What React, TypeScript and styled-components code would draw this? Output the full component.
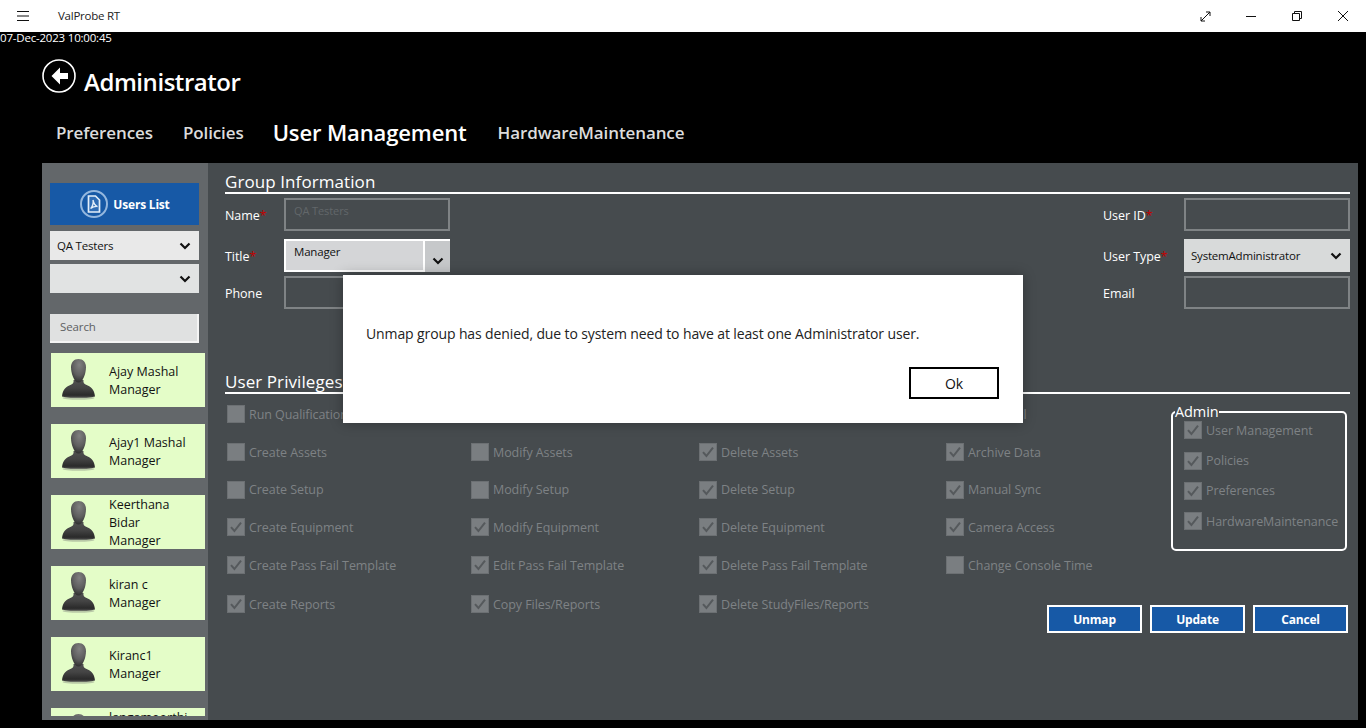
import React from "react";
import styled, { createGlobalStyle } from "styled-components";

const GlobalStyle = createGlobalStyle`
  html, body {
    margin: 0;
    padding: 0;
    background: #000;
  }
  * {
    box-sizing: border-box;
  }
`;

const font = `"Open Sans", "Noto Sans", sans-serif`;

const Page = styled.div`
  position: relative;
  width: 1366px;
  height: 728px;
  overflow: hidden;
  display: flex;
  flex-direction: column;
  background: #000;
  font-family: ${font};
`;

const TitleBar = styled.div`
  height: 32px;
  flex: none;
  background: #fff;
  display: flex;
  align-items: center;
  color: #222;
`;

const Hamburger = styled.div`
  width: 58px;
  padding-left: 17px;
  display: flex;
`;

const AppName = styled.div`
  font-size: 11.5px;
  letter-spacing: -0.25px;
  padding-bottom: 1px;
  flex: 1;
`;

const WindowButton = styled.div`
  width: 46px;
  height: 32px;
  display: flex;
  align-items: center;
  justify-content: center;
`;

const Stamp = styled.div`
  height: 12px;
  color: #fff;
  font-size: 11.5px;
  line-height: 12px;
  letter-spacing: -0.2px;
`;

const Header = styled.div`
  padding: 15px 0 0 42px;
  display: flex;
  align-items: flex-start;
  gap: 8px;
  height: 64px;
  flex: none;
`;

const PageTitle = styled.h1`
  margin: 7px 0 0;
  color: #fff;
  font-size: 24px;
  line-height: 32px;
  font-weight: 600;
  letter-spacing: -0.45px;
`;

const Tabs = styled.div`
  display: flex;
  align-items: center;
  height: 55px;
  flex: none;
  padding: 0 0 7px 56px;
`;

const Tab = styled.div<{ $active?: boolean; $gap: number }>`
  color: ${(p) => (p.$active ? "#fff" : "#dcdcdc")};
  font-size: ${(p) => (p.$active ? "22px" : "17px")};
  font-weight: 600;
  letter-spacing: ${(p) => (p.$active ? "-0.13px" : "-0.1px")};
  margin-right: ${(p) => p.$gap}px;
  white-space: nowrap;
`;

const Panel = styled.div`
  flex: none;
  margin-left: 42px;
  width: 1316px;
  height: 557px;
  display: flex;
`;

const Sidebar = styled.div`
  width: 166px;
  flex: none;
  background: #63676a;
  padding: 20px 0 0 8px;
  display: flex;
  flex-direction: column;
`;

const ListButton = styled.div`
  width: 149px;
  height: 42px;
  background: #1759a6;
  color: #fff;
  font-size: 12px;
  font-weight: 700;
  letter-spacing: -0.2px;
  display: flex;
  align-items: center;
  justify-content: center;
  gap: 4px;
  margin-bottom: 6px;
`;

const SideSelect = styled.div<{ $tone: string; $gap: number }>`
  width: 149px;
  height: 29px;
  background: ${(p) => p.$tone};
  color: #111;
  font-size: 11.5px;
  letter-spacing: -0.2px;
  display: flex;
  align-items: center;
  justify-content: space-between;
  padding: 0 8px 0 7px;
  margin-bottom: ${(p) => p.$gap}px;
`;

const SearchBox = styled.div`
  width: 149px;
  height: 29px;
  background: #e0e1e1;
  border-right: 2px solid #f4f4f4;
  border-bottom: 2px solid #f4f4f4;
  color: #5d6062;
  font-size: 11.5px;
  letter-spacing: -0.1px;
  display: flex;
  align-items: center;
  padding: 0 0 2px 10px;
  margin-bottom: 10px;
`;

const UserList = styled.div`
  height: 363px;
  overflow: hidden;
  padding-left: 1px;
  display: flex;
  flex-direction: column;
  gap: 17px;
`;

const UserCard = styled.div`
  width: 154px;
  height: 54px;
  flex: none;
  background: #e4fdc8;
  display: flex;
  align-items: center;
  padding-left: 10px;
  gap: 13px;
  color: #111;
  font-size: 12.5px;
  line-height: 18px;
  overflow: hidden;
`;

const UserText = styled.div`
  width: 82px;
  flex: none;
  padding-top: 2px;
  white-space: nowrap;
`;

const Main = styled.div`
  flex: 1;
  min-width: 0;
  background: #464b4e;
  padding: 8px 8px 0 17px;
`;

const SectionTitle = styled.div<{ $top?: number }>`
  height: 23px;
  margin-top: ${(p) => p.$top ?? 0}px;
  border-bottom: 2px solid #fff;
  color: #fff;
  font-size: 17px;
  line-height: 21px;
  letter-spacing: 0.08px;
  white-space: nowrap;
`;

const FormGrid = styled.div`
  display: grid;
  grid-template-columns: 59px 166px 1fr 81px 166px;
  grid-template-rows: 41px 37px 33px;
  margin-top: 4px;
`;

const FieldLabel = styled.div`
  height: 33px;
  padding-top: 2px;
  display: flex;
  align-items: center;
  color: #fff;
  font-size: 12.5px;
  letter-spacing: -0.05px;
  white-space: nowrap;
`;

const Required = styled.span`
  color: #c00000;
`;

const TextField = styled.div`
  height: 33px;
  border: 2px solid #7f8385;
  color: #62676a;
  font-size: 11px;
  padding: 3px 0 0 8px;
  letter-spacing: -0.1px;
`;

const TitleSelect = styled.div`
  height: 33px;
  display: flex;
  background: #fff;
  padding: 2px 0 0 2px;
  color: #111;
  font-size: 11.5px;
  letter-spacing: -0.2px;
`;

const TitleValue = styled.div`
  width: 137px;
  height: 29px;
  background: #d4d5d7;
  padding: 3px 0 0 8px;
`;

const TitleArrow = styled.div`
  margin-left: 2px;
  flex: 1;
  height: 31px;
  background: #c6c8ca;
  display: flex;
  align-items: center;
  justify-content: center;
  padding-top: 8px;
`;

const TypeSelect = styled.div`
  height: 33px;
  background: #d8dada;
  color: #111;
  font-size: 11.5px;
  letter-spacing: -0.2px;
  display: flex;
  align-items: center;
  justify-content: space-between;
  padding: 0 8px 0 7px;
`;

const PrivilegeGrid = styled.div`
  display: grid;
  grid-template-columns: 244px 228px 247px 225px 179px;
  grid-template-rows: 38px 38px 37px 38px 38px 40px;
  padding-left: 2px;
  margin-top: 1px;
`;

const CheckRow = styled.div`
  display: flex;
  align-items: center;
  gap: 4px;
  color: #7e8285;
  font-size: 12.5px;
  letter-spacing: -0.07px;
  white-space: nowrap;
`;

const Box = styled.div`
  width: 18px;
  height: 18px;
  flex: none;
  background: #7a7e81;
  border: 1px solid #6c7073;
  display: flex;
  align-items: center;
  justify-content: center;
`;

const AdminGroup = styled.fieldset`
  grid-column: 5;
  grid-row: 1 / 6;
  align-self: start;
  width: 176px;
  height: 148px;
  margin: 8px 0 0;
  padding: 0 0 0 11px;
  border: 2px solid #fff;
  border-radius: 5px;
  display: flex;
  flex-direction: column;
`;

const AdminLegend = styled.legend`
  color: #fff;
  font-size: 14.5px;
  line-height: 18px;
  padding: 0;
  margin-left: -9px;
  letter-spacing: -0.1px;
`;

const AdminRows = styled.div`
  margin-top: -6px;
  display: flex;
  flex-direction: column;
`;

const AdminRow = styled(CheckRow)`
  height: 30.4px;
  flex: none;
`;

const ActionRow = styled.div`
  grid-column: 4 / 6;
  grid-row: 6;
  align-self: start;
  margin-top: 21px;
  display: flex;
  justify-content: flex-end;
  gap: 8px;
  padding-right: 2px;
`;

const ActionButton = styled.div`
  width: 95px;
  height: 28px;
  background: #1759a6;
  border: 2px solid #fff;
  color: #fff;
  font-size: 12px;
  font-weight: 700;
  letter-spacing: -0.2px;
  display: flex;
  align-items: center;
  justify-content: center;
`;

const Modal = styled.div`
  position: absolute;
  left: 343px;
  top: 275px;
  width: 680px;
  height: 148px;
  background: #fff;
  box-shadow: 0 0 12px rgba(0, 0, 0, 0.3);
  padding: 49px 24px 0 23px;
  display: flex;
  flex-direction: column;
  align-items: flex-start;
`;

const ModalText = styled.div`
  color: #222;
  font-size: 14px;
  line-height: 20px;
  letter-spacing: -0.115px;
  white-space: nowrap;
`;

const OkButton = styled.div`
  align-self: flex-end;
  width: 90px;
  height: 32px;
  margin-top: 23px;
  border: 2px solid #000;
  background: #fff;
  color: #111;
  font-size: 14px;
  display: flex;
  align-items: center;
  justify-content: center;
`;

const Chevron = () => (
  <svg width="12" height="8" viewBox="0 0 12 8">
    <path d="M1.5 1.5 6 6l4.5-4.5" fill="none" stroke="#111" strokeWidth="2.2" />
  </svg>
);

const Tick = () => (
  <svg width="14" height="14" viewBox="0 0 14 14">
    <path d="M2 7.2 5.4 11 12 2.6" fill="none" stroke="#55595c" strokeWidth="2" />
  </svg>
);

const Check = ({ on }: { on?: boolean }) => <Box>{on && <Tick />}</Box>;

const BackIcon = () => (
  <svg width="34" height="34" viewBox="0 0 34 34">
    <circle cx="17" cy="17" r="16" fill="none" stroke="#fff" strokeWidth="1.6" />
    <path d="M18 8.5 9.5 17l8.5 8.5v-5.6h8v-5.8h-8z" fill="#fff" />
  </svg>
);

const PdfIcon = () => (
  <svg width="30" height="30" viewBox="0 0 30 30">
    <circle cx="15" cy="15" r="13" fill="none" stroke="#94b7de" strokeWidth="2" />
    <path d="M9.500 7h7l4 4v12h-11z" fill="#2f6cb4" stroke="#e3eef9" strokeWidth="1.7" />
    <path
      d="M14 11c.6 3.200-.8 6.800-2.400 8.600 2-1.500 4.800-2.300 6.900-2.100-2-.8-3.800-3.100-4.500-6.500z"
      fill="none"
      stroke="#e3eef9"
      strokeWidth="1.300"
    />
  </svg>
);

const PersonIcon = () => (
  <svg width="35" height="44" viewBox="0 0 35 44" style={{ flex: "none" }}>
    <defs>
      <radialGradient id="head" cx="0.55" cy="0.25" r="0.75">
        <stop offset="0" stopColor="#808080" />
        <stop offset="0.6" stopColor="#5e5e5e" />
        <stop offset="1" stopColor="#303030" />
      </radialGradient>
      <linearGradient id="body" x1="0" y1="0" x2="0" y2="1">
        <stop offset="0" stopColor="#505050" />
        <stop offset="0.45" stopColor="#444" />
        <stop offset="0.85" stopColor="#2a2a2a" />
        <stop offset="1" stopColor="#505050" />
      </linearGradient>
    </defs>
    <ellipse cx="17.500" cy="40" rx="16" ry="1.800" fill="#b9c9a7" />
    <path
      d="M12.500 22c.4 2.500-.4 3.800-2.600 4.800C5.500 28.800 1.600 31 1 38.500c4 1.800 29 1.800 33 0-.6-7.500-4.500-9.700-8.900-11.700-2.200-1-3-2.300-2.600-4.800z"
      fill="url(#body)"
    />
    <path
      d="M17.500 1c4.600 0 7.500 3.400 7.500 8.200 0 5.800-3 15.300-7.500 15.300S10 15 10 9.200C10 4.400 12.900 1 17.500 1z"
      fill="url(#head)"
    />
  </svg>
);

const users = [
  ["Ajay Mashal", "Manager"],
  ["Ajay1 Mashal", "Manager"],
  ["Keerthana", "Bidar", "Manager"],
  ["kiran c", "Manager"],
  ["Kiranc1", "Manager"],
  ["langamoorthi", "\u00a0", "Manager"],
];

// label + checked state, column by column; blank labels sit under the dialog
const privileges: [string, boolean][][] = [
  [["Run Qualification", false], ["", false], ["", false], ["Audit Trail", true]],
  [["Create Assets", false], ["Modify Assets", false], ["Delete Assets", true], ["Archive Data", true]],
  [["Create Setup", false], ["Modify Setup", false], ["Delete Setup", true], ["Manual Sync", true]],
  [["Create Equipment", true], ["Modify Equipment", true], ["Delete Equipment", true], ["Camera Access", true]],
  [["Create Pass Fail Template", true], ["Edit Pass Fail Template", true], ["Delete Pass Fail Template", true], ["Change Console Time", false]],
  [["Create Reports", true], ["Copy Files/Reports", true], ["Delete StudyFiles/Reports", true]],
];

const adminItems = ["User Management", "Policies", "Preferences", "HardwareMaintenance"];

const App: React.FC = () => {
  return (
    <Page>
      <GlobalStyle />
      <TitleBar>
        <Hamburger>
          <svg width="12" height="10" viewBox="0 0 12 10">
            <path d="M0 .5h12M0 5h12M0 9.500h12" stroke="#111" strokeWidth="1" />
          </svg>
        </Hamburger>
        <AppName>ValProbe RT</AppName>
        <WindowButton>
          <svg width="11" height="11" viewBox="0 0 11 11">
            <path d="M1 10 10 1M6 1h4v4M1 6v4h4" fill="none" stroke="#111" strokeWidth="1" />
          </svg>
        </WindowButton>
        <WindowButton>
          <svg width="10" height="10" viewBox="0 0 10 10">
            <path d="M0 5.500h10" stroke="#111" strokeWidth="1" />
          </svg>
        </WindowButton>
        <WindowButton>
          <svg width="10" height="10" viewBox="0 0 10 10">
            <path d="M.5 2.500h7v7h-7zM2.500 2.500v-2h7v7h-2" fill="none" stroke="#111" strokeWidth="1" />
          </svg>
        </WindowButton>
        <WindowButton>
          <svg width="10" height="10" viewBox="0 0 10 10">
            <path d="M0 0l10 10M10 0 0 10" stroke="#111" strokeWidth="1" />
          </svg>
        </WindowButton>
      </TitleBar>
      <Stamp>07-Dec-2023 10:00:45</Stamp>
      <Header>
        <BackIcon />
        <PageTitle>Administrator</PageTitle>
      </Header>
      <Tabs>
        <Tab $gap={30}>Preferences</Tab>
        <Tab $gap={29}>Policies</Tab>
        <Tab $active $gap={31}>User Management</Tab>
        <Tab $gap={0}>HardwareMaintenance</Tab>
      </Tabs>
      <Panel>
        <Sidebar>
          <ListButton>
            <PdfIcon />
            Users List
          </ListButton>
          <SideSelect $tone="#e9e9e9" $gap={4}>
            QA Testers
            <Chevron />
          </SideSelect>
          <SideSelect $tone="#e1e3e3" $gap={21}>
            <span />
            <Chevron />
          </SideSelect>
          <SearchBox>Search</SearchBox>
          <UserList>
            {users.map((lines) => (
              <UserCard key={lines[0]}>
                <PersonIcon />
                <UserText>
                  {lines.map((line) => (
                    <div key={line}>{line}</div>
                  ))}
                </UserText>
              </UserCard>
            ))}
          </UserList>
        </Sidebar>
        <Main>
          <SectionTitle>Group Information</SectionTitle>
          <FormGrid>
            <FieldLabel>
              Name<Required>*</Required>
            </FieldLabel>
            <TextField>QA Testers</TextField>
            <span />
            <FieldLabel>
              User ID<Required>*</Required>
            </FieldLabel>
            <TextField />
            <FieldLabel>
              Title<Required>*</Required>
            </FieldLabel>
            <TitleSelect>
              <TitleValue>Manager</TitleValue>
              <TitleArrow>
                <Chevron />
              </TitleArrow>
            </TitleSelect>
            <span />
            <FieldLabel>
              User Type<Required>*</Required>
            </FieldLabel>
            <TypeSelect>
              SystemAdministrator
              <Chevron />
            </TypeSelect>
            <FieldLabel>Phone</FieldLabel>
            <TextField />
            <span />
            <FieldLabel>Email</FieldLabel>
            <TextField />
          </FormGrid>
          <SectionTitle $top={62}>User Privileges</SectionTitle>
          <PrivilegeGrid>
            {privileges.flat().map(([label, on], i) => (
              <CheckRow key={i}>
                <Check on={on} />
                {label}
              </CheckRow>
            ))}
            <AdminGroup>
              <AdminLegend>Admin</AdminLegend>
              <AdminRows>
                {adminItems.map((item) => (
                  <AdminRow key={item}>
                    <Check on />
                    {item}
                  </AdminRow>
                ))}
              </AdminRows>
            </AdminGroup>
            <ActionRow>
              <ActionButton>Unmap</ActionButton>
              <ActionButton>Update</ActionButton>
              <ActionButton>Cancel</ActionButton>
            </ActionRow>
          </PrivilegeGrid>
        </Main>
      </Panel>
      <Modal>
        <ModalText>
          Unmap group has denied, due to system need to have at least one Administrator user.
        </ModalText>
        <OkButton>Ok</OkButton>
      </Modal>
    </Page>
  );
};

export default App;
